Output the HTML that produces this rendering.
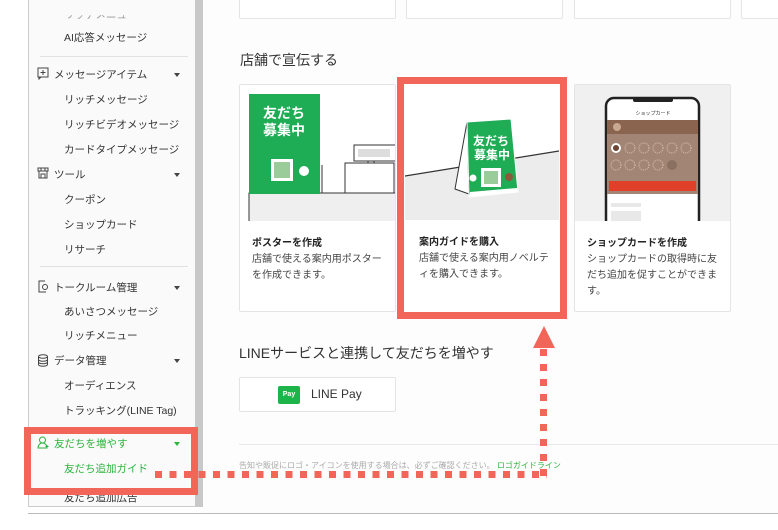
<!DOCTYPE html>
<html><head><meta charset="utf-8"><style>
*{margin:0;padding:0;box-sizing:border-box}
body{width:778px;height:530px;background:#fff;position:relative;overflow:hidden;font-family:"Liberation Sans","Noto Sans CJK JP",sans-serif;color:#333}
.a{position:absolute}
.sb{left:28px;top:-2px;width:167px;height:509px;border-left:1px solid #ccc;border-bottom:1px solid #ccc;background:#fafafa}
.it{position:absolute;font-size:10.5px;white-space:nowrap;color:#333}
.sub{left:64px}
.hd{left:54px}
.caret{position:absolute;left:174px;width:0;height:0;border-left:3px solid transparent;border-right:3px solid transparent;border-top:4px solid #444}
.div{position:absolute;left:40px;width:148px;height:1px;background:#e2e2e2}
.card{position:absolute;background:#fff;border:1px solid #e4e4e4;border-radius:2px}
.ct{position:absolute;font-size:10px;font-weight:bold;color:#222;white-space:nowrap}
.cd{position:absolute;font-size:10px;line-height:16px;color:#444;width:132px}
</style></head><body>
<div class="a sb"></div>
<div class="a" style="left:195px;top:0;width:8px;height:507px;background:#c8c8c8"></div>
<div class="a" style="left:203px;top:0;width:575px;height:514px;background:#fdfdfd"></div>

<div class="it sub" style="top:7px;color:#999;clip-path:inset(55% 0 0 0)">リッチメニュー</div>
<div class="it sub" style="top:30px">AI応答メッセージ</div>
<div class="div" style="top:56px"></div>
<svg class="a" style="left:37px;top:67px" width="12" height="13" viewBox="0 0 12 13"><rect x="1" y="1" width="10" height="9" fill="none" stroke="#444"/><path d="M6 3v5M3.5 5.5h5M2 10v2l2-2" stroke="#444" fill="none"/></svg>
<div class="it hd" style="top:67px">メッセージアイテム</div><div class="caret" style="top:73px"></div>
<div class="it sub" style="top:92px">リッチメッセージ</div>
<div class="it sub" style="top:117px">リッチビデオメッセージ</div>
<div class="it sub" style="top:142px">カードタイプメッセージ</div>
<svg class="a" style="left:37px;top:167px" width="12" height="12" viewBox="0 0 12 12"><path d="M1 1h10v3H1zM2 4v7h8V4M4 11V7h4v4M4 1v3M8 1v3" stroke="#444" fill="none"/></svg>
<div class="it hd" style="top:167px">ツール</div><div class="caret" style="top:173px"></div>
<div class="it sub" style="top:192px">クーポン</div>
<div class="it sub" style="top:217px">ショップカード</div>
<div class="it sub" style="top:242px">リサーチ</div>
<div class="div" style="top:266px"></div>
<svg class="a" style="left:37px;top:280px" width="12" height="13" viewBox="0 0 12 13"><path d="M8 1H2v11h7" stroke="#444" fill="none"/><circle cx="8" cy="7" r="2.5" stroke="#444" fill="none"/></svg>
<div class="it hd" style="top:280px">トークルーム管理</div><div class="caret" style="top:286px"></div>
<div class="it sub" style="top:304px">あいさつメッセージ</div>
<div class="it sub" style="top:328px">リッチメニュー</div>
<svg class="a" style="left:37px;top:354px" width="12" height="13" viewBox="0 0 12 13"><ellipse cx="6" cy="2.5" rx="4.5" ry="1.8" stroke="#444" fill="none"/><path d="M1.5 2.5v8c0 1 2 1.8 4.5 1.8s4.5-.8 4.5-1.8v-8M1.5 5.5c0 1 2 1.8 4.5 1.8s4.5-.8 4.5-1.8M1.5 8c0 1 2 1.8 4.5 1.8s4.5-.8 4.5-1.8" stroke="#444" fill="none"/></svg>
<div class="it hd" style="top:353px">データ管理</div><div class="caret" style="top:359px"></div>
<div class="it sub" style="top:378px">オーディエンス</div>
<div class="it sub" style="top:403px">トラッキング(LINE Tag)</div>
<svg class="a" style="left:37px;top:436px" width="13" height="13" viewBox="0 0 13 13"><circle cx="5.5" cy="4" r="3" stroke="#2db33e" fill="none"/><path d="M1 12c0-3 2-5 4.5-5s4.5 2 4.5 5zM10 9v3M8.5 10.5h3" stroke="#2db33e" fill="none"/></svg>
<div class="it hd" style="top:436px;color:#2db33e">友だちを増やす</div><div class="caret" style="top:442px;border-top-color:#2db33e"></div>
<div class="it sub" style="top:461px;color:#2db33e">友だち追加ガイド</div>
<div class="it sub" style="top:490px">友だち追加広告</div>
<div class="a" style="left:24px;top:427px;width:174px;height:68px;border:7px solid #f2665a"></div>

<div class="card" style="left:239px;top:-4px;width:157px;height:23px"></div>
<div class="card" style="left:406px;top:-4px;width:157px;height:23px"></div>
<div class="card" style="left:574px;top:-4px;width:157px;height:23px"></div>
<div class="card" style="left:741px;top:-4px;width:50px;height:23px"></div>

<div class="a" style="left:240px;top:50px;font-size:14px;color:#333">店舗で宣伝する</div>

<div class="card" style="left:239px;top:84px;width:157px;height:228px;overflow:hidden">
<svg class="a" style="left:0;top:0" width="157" height="136" viewBox="0 0 157 136">
<rect x="0" y="0" width="157" height="136" fill="#fff"/>
<rect x="9" y="108" width="148" height="28" fill="#efefef"/><path d="M9 136V108h148" stroke="#333" fill="none"/>
<rect x="105" y="78" width="49" height="30" fill="#fff" stroke="#333"/>
<rect x="114" y="60" width="42" height="16" fill="#fff" stroke="#333"/><rect x="118" y="64" width="32" height="8" fill="#ddd"/>
<path d="M128 76v2M134 76v2M82 108V80" stroke="#333"/>
<rect x="9" y="9" width="71" height="100" fill="#1eac55"/>
<text x="44" y="33" fill="#fff" font-size="14" font-weight="bold" text-anchor="middle" font-family="Noto Sans CJK JP">友だち</text>
<text x="44" y="50" fill="#fff" font-size="14" font-weight="bold" text-anchor="middle" font-family="Noto Sans CJK JP">募集中</text>
<rect x="31" y="74" width="22" height="22" fill="#fff"/><rect x="34" y="77" width="16" height="16" fill="#9c9"/>
<circle cx="64" cy="86" r="5" fill="#fff"/>
</svg>
<div class="ct" style="left:12px;top:149px">ポスターを作成</div>
<div class="cd" style="left:12px;top:167px">店舗で使える案内用ポスターを作成できます。</div>
</div>

<div class="a" style="left:397px;top:77px;width:170px;height:242px;border:7px solid #f2665a;background:#fff">
<svg class="a" style="left:1px;top:0" width="154" height="136" viewBox="0 0 154 136">
<rect width="154" height="136" fill="#fff"/>
<path d="M0 92L154 67V136H0z" fill="#ececec"/><path d="M0 92L154 67" stroke="#333" stroke-width="1.2"/>
<path d="M50 105L62 38 64 110z" fill="#fff" stroke="#333"/>
<path d="M62 38L106 35 113 108 64 113z" fill="#1eac55" stroke="#fff"/>
<text x="86" y="61" fill="#fff" font-size="12" font-weight="bold" text-anchor="middle" font-family="Noto Sans CJK JP">友だち</text>
<text x="87" y="75" fill="#fff" font-size="12" font-weight="bold" text-anchor="middle" font-family="Noto Sans CJK JP">募集中</text>
<rect x="76" y="84" width="20" height="19" fill="#fff"/><rect x="79" y="87" width="14" height="13" fill="#9c9"/>
<circle cx="104" cy="93" r="4" fill="#8a5a3a"/><circle cx="68" cy="94" r="3.5" fill="#fff"/>
<path d="M65 108L112 104 113 108 64 113z" fill="#fff"/>
</svg>
<div class="ct" style="left:15px;top:149px">案内ガイドを購入</div>
<div class="cd" style="left:15px;top:167px">店舗で使える案内用ノベルティを購入できます。</div>
</div>

<div class="card" style="left:574px;top:84px;width:157px;height:228px;overflow:hidden">
<svg class="a" style="left:0;top:0" width="157" height="136" viewBox="0 0 157 136">
<rect width="157" height="136" fill="#f0f0f0"/>
<rect x="31" y="13" width="93" height="130" rx="8" fill="#fff" stroke="#222" stroke-width="2.5"/>
<rect x="58" y="12" width="40" height="5" rx="2" fill="#222"/>
<text x="78" y="30" font-size="5" text-anchor="middle" fill="#333" font-family="Noto Sans CJK JP">ショップカード</text>
<rect x="32" y="35" width="91" height="14" fill="#8b6450"/><circle cx="42" cy="42" r="4" fill="#c9a890"/>
<rect x="32" y="49" width="91" height="60" fill="#a38575"/>
<g fill="none" stroke="#d8c5b8" stroke-dasharray="1 1"><circle cx="55" cy="63" r="5"/><circle cx="69" cy="63" r="5"/><circle cx="83" cy="63" r="5"/><circle cx="97" cy="63" r="5"/><circle cx="111" cy="63" r="5"/><circle cx="41" cy="80" r="5"/><circle cx="55" cy="80" r="5"/><circle cx="69" cy="80" r="5"/><circle cx="83" cy="80" r="5"/></g>
<circle cx="41" cy="63" r="5" fill="#fff"/><circle cx="41" cy="63" r="3" fill="#6b4530"/><circle cx="97" cy="80" r="5" fill="#8a7060"/>
<rect x="34" y="96" width="87" height="10" fill="#e0402a"/>
<rect x="36" y="118" width="30" height="4" fill="#e8e8e8"/><rect x="36" y="126" width="30" height="10" fill="#e8e8e8"/>
</svg>
<div class="ct" style="left:12px;top:149px">ショップカードを作成</div>
<div class="cd" style="left:12px;top:167px">ショップカードの取得時に友だち追加を促すことができます。</div>
</div>

<div class="a" style="left:239px;top:343px;font-size:14px;color:#333">LINEサービスと連携して友だちを増やす</div>
<div class="card" style="left:239px;top:377px;width:157px;height:35px">
<div class="a" style="left:38px;top:8px;width:22px;height:18px;background:#1db54a;border-radius:2px;color:#fff;font-size:7px;font-weight:bold;text-align:center;line-height:18px">Pay</div>
<div class="a" style="left:71px;top:9px;font-size:12px;color:#333">LINE Pay</div>
</div>
<div class="a" style="left:239px;top:444px;width:539px;height:1px;background:#e8e8e8"></div>
<div class="a" style="left:239px;top:460px;font-size:8px;color:#aaa;white-space:nowrap">告知や販促にロゴ・アイコンを使用する場合は、必ずご確認ください。 <span style="color:#2db33e">ロゴガイドライン</span></div>
<div class="a" style="left:28px;top:513px;width:750px;height:1px;background:#bbb"></div>

<div class="a" style="left:155px;top:471px;width:392px;height:7px;background:repeating-linear-gradient(90deg,#f2665a 0 7px,transparent 7px 14.5px)"></div>
<div class="a" style="left:540px;top:349px;width:7px;height:129px;background:repeating-linear-gradient(180deg,#f2665a 0 7px,transparent 7px 15px)"></div>
<div class="a" style="left:533px;top:326px;width:0;height:0;border-left:11px solid transparent;border-right:11px solid transparent;border-bottom:22px solid #f2665a"></div>
</body></html>
